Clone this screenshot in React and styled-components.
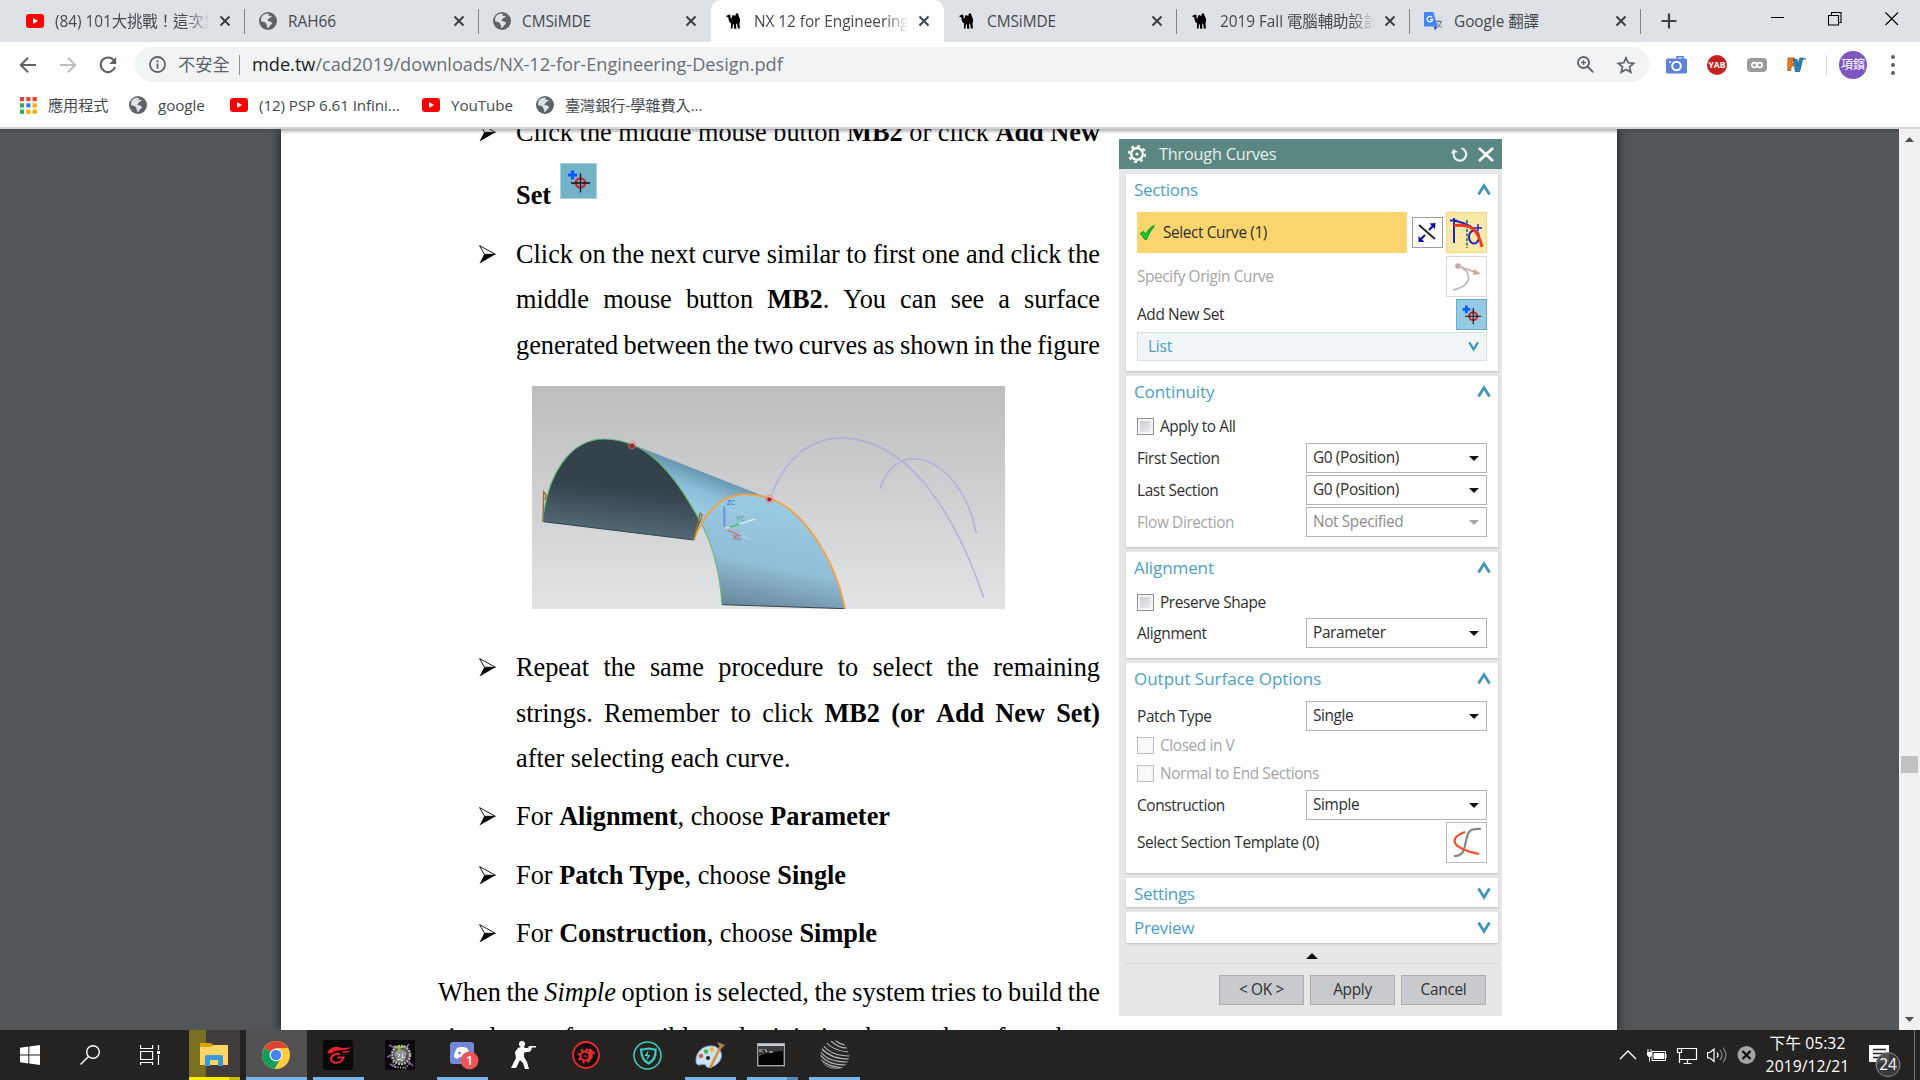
import React from "react";
import styled, { createGlobalStyle, css } from "styled-components";

const UI = `"Open Sans", "Noto Sans CJK TC", sans-serif`;
const SERIF = `"Liberation Serif", "Noto Sans CJK TC", serif`;

const Global = createGlobalStyle`
  *, *::before, *::after { box-sizing: border-box; }
  html, body { margin: 0; padding: 0; overflow: hidden; }
  svg { display: block; flex: none; overflow: visible; }
`;

const Screen = styled.div`
  width: 1920px;
  height: 1080px;
  display: flex;
  flex-direction: column;
  overflow: hidden;
  font-family: ${UI};
  background: #fff;
`;

/* ---------- tab strip ---------- */
const TabStrip = styled.div`
  height: 42px;
  flex: none;
  background: #dee1e6;
  display: flex;
  padding-left: 12px;
`;
const Tab = styled.div`
  width: ${(p) => p.$w || 233}px;
  height: 42px;
  flex: none;
  display: flex;
  align-items: center;
  padding: 0 14px 0 14px;
  background: ${(p) => (p.$active ? "#fff" : "transparent")};
  border-radius: 10px 10px 0 0;
  position: relative;
  ${(p) =>
    p.$sep &&
    css`
      &::after {
        content: "";
        position: absolute;
        right: 0;
        top: 9px;
        width: 1px;
        height: 25px;
        background: #808387;
      }
    `}
`;
const TabTitle = styled.span`
  flex: 1;
  min-width: 0;
  margin: 1px 9px 0 11px;
  font-size: 15.4px;
  letter-spacing: -0.05px;
  line-height: 25px;
  color: #45494d;
  white-space: nowrap;
  overflow: hidden;
  ${(p) => p.$fade && css`mask-image: linear-gradient(90deg, #000 84%, transparent 100%);`}
`;
const NewTab = styled.div`
  width: 56px;
  display: flex;
  align-items: center;
  justify-content: center;
`;
const WindowButtons = styled.div`
  margin-left: auto;
  display: flex;
  align-items: flex-start;
  padding: 12px 21px 0 0;
  gap: 43px;
`;

/* ---------- toolbar ---------- */
const Toolbar = styled.div`
  height: 45px;
  flex: none;
  display: flex;
  align-items: center;
  padding-left: 19px;
`;
const NavButtons = styled.div`
  width: 116px;
  display: flex;
  gap: 22px;
  align-items: center;
`;
const Omnibox = styled.div`
  width: 1514px;
  height: 35px;
  border-radius: 18px;
  background: #f1f3f4;
  display: flex;
  align-items: center;
  padding: 0 14px 0 14px;
`;
const Insecure = styled.span`
  margin-left: 12px;
  width: 61px;
  font-size: 17.3px;
  line-height: 24px;
  color: #5f6368;
`;
const VRule = styled.span`
  width: 1px;
  height: 20px;
  background: ${(p) => p.$c || "#8d9094"};
`;
const Url = styled.span`
  margin: -2px 0 0 12px;
  flex: 1;
  font-size: 18.2px;
  letter-spacing: -0.02px;
  line-height: 26px;
  color: #6b6f74;
  white-space: nowrap;
  b { font-weight: 400; color: #202124; }
`;
const OmniIcons = styled.div`
  display: flex;
  align-items: center;
  gap: 23px;
`;
const Extensions = styled.div`
  display: flex;
  align-items: center;
  gap: 20px;
  margin-left: 17px;
`;
const Avatar = styled.div`
  width: 28px;
  height: 28px;
  border-radius: 50%;
  background: #7e57c2;
  color: #fff;
  font-size: 12px;
  line-height: 27px;
  text-align: center;
  white-space: nowrap;
  margin-left: 12px;
`;
const MenuDots = styled.div`
  display: grid;
  gap: 4px;
  margin-left: 24px;
  i { width: 4px; height: 4px; border-radius: 50%; background: #5f6368; }
`;

/* ---------- bookmarks ---------- */
const Bookmarks = styled.div`
  height: 40px;
  flex: none;
  display: flex;
  align-items: center;
  padding: 0 0 4px 19px;
`;
const Bookmark = styled.div`
  display: flex;
  align-items: center;
  gap: 11px;
  width: ${(p) => p.$w}px;
  font-size: 15.2px;
  letter-spacing: -0.08px;
  line-height: 22px;
  color: #45494d;
  white-space: nowrap;
`;

/* ---------- viewer ---------- */
const Viewer = styled.div`
  height: 903px;
  flex: none;
  display: flex;
  background: #525659;
  border-top: 2px solid #d3d4d8;
  padding-left: 281px;
  overflow: hidden;
  position: relative;
  &::before {
    content: "";
    position: absolute;
    z-index: 2;
    inset: 0 21px auto 0;
    height: 5px;
    background: linear-gradient(rgba(60, 60, 65, 0.4), rgba(60, 60, 65, 0));
  }
`;
const Page = styled.div`
  width: 1336px;
  height: 901px;
  flex: none;
  background: #fff;
  display: flex;
  align-items: flex-start;
  box-shadow: 0 0 9px 1px rgba(0, 0, 0, 0.6);
`;
const TextColumn = styled.div`
  width: 662px;
  margin: -19px 0 0 157px;
  font-family: ${SERIF};
  font-size: 26.3px;
  line-height: 45.4px;
  color: #000;
`;
const Item = styled.div`
  display: grid;
  grid-template-columns: 37px 584px;
  padding-left: 41px;
  margin-bottom: ${(p) => p.$mb || 0}px;
`;
const BulletBox = styled.div`
  padding-top: 13px;
`;
const Line = styled.div`
  height: ${(p) => p.$h || 45.4}px;
  white-space: nowrap;
  display: flex;
  justify-content: ${(p) => (p.$j ? "space-between" : "flex-start")};
  gap: ${(p) => (p.$j ? 0 : "6.6px")};
  align-items: flex-start;
`;
const FigureBox = styled.div`
  width: 473px;
  height: 223px;
  margin: 18px 0 36px 94px;
  overflow: hidden;
`;
const InlineIcon = styled.div`
  width: 37px;
  height: 36px;
  margin: -10px 0 0 2px;
  border: 1px solid #a7d2e0;
  background: #74b2c8;
`;

/* ---------- dialog ---------- */
const Dialog = styled.div`
  width: 383px;
  height: 877px;
  margin: 10px 0 0 19px;
  background: #e7e7e7;
  display: flex;
  flex-direction: column;
`;
const DialogHeader = styled.div`
  height: 30px;
  background: #5b8782;
  color: #e6efee;
  display: flex;
  align-items: center;
  padding: 0 8px 0 9px;
  font-size: 16.3px;
  letter-spacing: -0.22px;
  span { flex: 1; margin-left: 13px; }
  svg + svg { margin-left: 10px; }
`;
const Cards = styled.div`
  display: flex;
  flex-direction: column;
  gap: 5px;
  padding: 5px 4px 0 7px;
`;
const Card = styled.div`
  height: ${(p) => p.$h}px;
  background: #fff;
  padding: 0 11px 0 11px;
  box-shadow: 0 1px 2px #bdbdbd;
`;
const CardTitle = styled.div`
  height: ${(p) => p.$h || 37}px;
  padding-top: ${(p) => p.$pt ?? 3}px;
  margin: 0 -4px 0 -3px;
  display: flex;
  justify-content: space-between;
  font-size: 17px;
  line-height: 25px;
  letter-spacing: ${(p) => p.$ls ?? -0.3}px;
  color: #4ba0ca;
  svg { margin-top: 7px; }
`;
const Row = styled.div`
  height: ${(p) => p.$h}px;
  display: flex;
  align-items: center;
  justify-content: space-between;
  font-size: 15.4px;
  letter-spacing: -0.38px;
  color: ${(p) => (p.$off ? "#a5a5a5" : "#2f2f2f")};
  white-space: nowrap;
`;
const Active = styled.div`
  width: 270px;
  height: 41px;
  margin-right: 1px;
  background: #fcd56c;
  display: flex;
  align-items: center;
  gap: 8px;
  padding-left: 3px;
`;
const IconButton = styled.div`
  width: ${(p) => p.$s}px;
  height: ${(p) => p.$s}px;
  border: 1px solid ${(p) => p.$bd || "#bdbdbd"};
  background: ${(p) => p.$bg || "#fff"};
  display: flex;
  align-items: center;
  justify-content: center;
`;
const ListBar = styled.div`
  height: 29px;
  margin-top: 2px;
  border: 1px solid #dcdfe0;
  background: #f0f6f8;
  color: #4ba0ca;
  font-size: 15.4px;
  letter-spacing: -0.2px;
  display: flex;
  align-items: center;
  justify-content: space-between;
  padding: 0 7px 0 10px;
`;
const Select = styled.div`
  width: 181px;
  height: 30px;
  border: 1px solid #b4b4b4;
  background: #fff;
  display: flex;
  align-items: center;
  justify-content: space-between;
  padding: 0 7px 1px 6px;
  color: ${(p) => (p.$off ? "#8d8d8d" : "#2f2f2f")};
  &::after {
    content: "";
    margin-top: 1px;
    border: 5px solid transparent;
    border-top-color: ${(p) => (p.$off ? "#a5a5a5" : "#111")};
    border-bottom: 0;
  }
`;
const Check = styled.div`
  height: ${(p) => p.$h}px;
  padding-top: ${(p) => p.$pt || 0}px;
  display: flex;
  align-items: flex-start;
  gap: 6px;
  font-size: 15.4px;
  line-height: 18px;
  letter-spacing: ${(p) => p.$ls ?? -0.4}px;
  color: ${(p) => (p.$off ? "#a5a5a5" : "#2f2f2f")};
  &::before {
    content: "";
    width: 17px;
    height: 17px;
    border: 1px solid ${(p) => (p.$off ? "#c0c0c0" : "#8d8f8f")};
    box-shadow: inset 0 0 0 2px #f6f6f6;
    background: ${(p) => (p.$off ? "#fafafa" : "linear-gradient(135deg, #c4c7cf, #f6f6f6)")};
  }
`;
const Collapse = styled.div`
  height: 21px;
  margin: 0 4px 0 7px;
  border-bottom: 1px solid #d3d3d3;
  display: flex;
  justify-content: center;
  padding-top: 10px;
  &::after {
    content: "";
    height: 6px;
    border: 6px solid transparent;
    border-bottom-color: #111;
    border-top: 0;
  }
`;
const Buttons = styled.div`
  display: flex;
  gap: 6px;
  justify-content: flex-end;
  padding: 11px 16px 0 0;
`;
const Button = styled.div`
  width: 85px;
  height: 30px;
  border: 1px solid #adadad;
  background: #c8cacd;
  font-size: 15.4px;
  letter-spacing: -0.3px;
  line-height: 28px;
  text-align: center;
  color: #303030;
`;

/* ---------- scrollbar ---------- */
const ScrollBar = styled.div`
  width: 21px;
  margin-left: auto;
  background: #f1f1f1;
  display: flex;
  flex-direction: column;
  align-items: center;
  padding: 8px 0;
`;
const Thumb = styled.div`
  width: 17px;
  height: 17px;
  margin: 614px 0 auto;
  background: #c1c1c1;
`;

/* ---------- taskbar ---------- */
const Taskbar = styled.div`
  height: 50px;
  flex: none;
  background: #252322;
  display: flex;
  color: #fff;
`;
const StartArea = styled.div`
  width: 184px;
  display: flex;
  align-items: center;
  padding-left: 20px;
  gap: 40px;
`;
const Slot = styled.div`
  width: 62px;
  height: 50px;
  display: flex;
  align-items: center;
  justify-content: center;
  padding-right: ${(p) => p.$pr ?? 2}px;
  position: relative;
  background: ${(p) => (p.$focus ? "linear-gradient(90deg, #525050 61px, transparent 61px)" : "transparent")};
  &::after {
    content: "";
    position: absolute;
    left: ${(p) => (p.$focus ? 0 : 5)}px;
    right: ${(p) => (p.$focus ? 1 : 6)}px;
    bottom: 0;
    height: 3px;
    background: ${(p) => p.$line || "transparent"};
  }
`;
const Progress = styled.div`
  width: 51px;
  height: 50px;
  display: flex;
  align-items: center;
  justify-content: center;
  padding-right: 1px;
  background: linear-gradient(90deg, #7a7022 17px, #403d3c 17px);
`;
const Tray = styled.div`
  margin-left: auto;
  display: flex;
  align-items: center;
`;
const TrayIcons = styled.div`
  display: flex;
  align-items: center;
  gap: 10px;
`;
const Clock = styled.div`
  width: 100px;
  padding-left: 1px;
  text-align: center;
  font-size: 15.7px;
  letter-spacing: 0.05px;
  line-height: 23px;
`;
const Notify = styled.div`
  width: 57px;
  padding-left: 12px;
`;
const PeekLine = styled.div`
  width: 1px;
  height: 50px;
  margin-right: 5px;
  background: #77767a;
`;

/* ---------- icons ---------- */
const CloseX = () => (
  <svg width="12" height="12" viewBox="0 0 12 12" stroke="#3c4043" strokeWidth="2">
    <path d="M1.500 1.500l9 9M10.500 1.500l-9 9" />
  </svg>
);
const YT = () => (
  <svg width="18" height="14" viewBox="0 0 18 14">
    <rect width="18" height="14" rx="3" fill="#f00" />
    <path d="M7 4l5 3-5 3z" fill="#fff" />
  </svg>
);
const Globe = () => (
  <svg width="18" height="18" viewBox="0 0 18 18">
    <circle cx="9" cy="9" r="9" fill="#5f6368" />
    <path
      d="M9.5 1.8c1.2.2-.3 1.6.3 2.1.9.6 1.8-.5 2.6 0 .8.6-.4 1.4-1.5 1.7-.9.3-1 1.8-2 2.2-.9.3-.6 1.3.7 1.4 1.6 0 2.4.6 3.5 1.8-.3 1.5-1.6 1.6-2.1 2.6-.4 1-1.6 2.5-2.5 2.4-.9-.2.1-1.9-.7-2.8-.8-.8-.4-2-1.6-2.7-1.4-.9-3-.8-4.1-1.5-.4-3.2 1-6 4-6.9.8-.3 2.4-.5 3.4-.3z"
      fill="#dee1e6"
    />
  </svg>
);
const Camel = () => (
  <svg width="18" height="18" viewBox="0 0 18 18">
    <path
      d="M1.500 3.800L4 2.400l1.400.6.200 3.200 1 .3C6.800 4.500 7.400 3 8.300 3c1 0 1.300.9 1.900 1.200C10.500 2.500 11 1.200 12 1.200c1.200 0 1.300 1.800 1.900 3.200 1 1.600 1.500 3.200 1.100 5.200l-.5 2 .4 5h-2l-.7-4.200-.6-1-.5.4.2 5H9.200l-.4-4.600-.9.100-.3 4.200H5.800l.3-4.900C4.700 10.500 3.700 9 3.600 7.500L3.300 5.300l-1.800-.3z"
      fill="#000"
    />
  </svg>
);
const Translate = () => (
  <svg width="19" height="19" viewBox="0 0 19 19">
    <path d="M7 5h11.500v13H10z" fill="#dadce0" />
    <path d="M12 9.500h6M15 8v1.500M17 10c-1 3-2.500 4.500-4.500 5.500M13 11c1 2 2.500 3.500 4.500 4.500" stroke="#6b7f8c" fill="none" />
    <path d="M1 0h8.500l4 14.500H1a1 1 0 0 1-1-1V1a1 1 0 0 1 1-1z" fill="#4285f4" />
    <path d="M9.500 14.500h4L11 18.500z" fill="#2a56c6" />
    <path d="M8 5.200A2.800 2.800 0 1 0 8.700 7.500H6" stroke="#fff" strokeWidth="1.300" fill="none" />
  </svg>
);
const Bullet = () => (
  <svg width="17" height="19" viewBox="0 0 17 19">
    <path d="M.6.6l15.800 8.700H5.500z" fill="#fff" stroke="#000" strokeWidth=".9" />
    <path d="M5.200 9.300h11.300L.5 18.400z" fill="#000" />
  </svg>
);
const NewSet = ({ w, h }) => (
  <svg width={w} height={h} viewBox="0 0 35 34">
    <path d="M11.500 6.500v9M7 11h9" stroke="#0a5cff" strokeWidth="3.200" />
    <circle cx="19.500" cy="19" r="4.600" fill="none" stroke="#d0202a" strokeWidth="2.400" />
    <path d="M19.500 9.500v19M10 19h19" stroke="#111" strokeWidth="1.300" />
  </svg>
);
const Chevron = ({ down, s = 1 }) => (
  <svg width={14 * s} height={11 * s} viewBox="0 0 14 11" fill="none" stroke="#3f97c0" strokeWidth="2.800">
    <path d={down ? "M1.500 .5L7 9.300 12.500 .5" : "M1.500 10.500L7 1.700 12.500 10.500"} />
  </svg>
);
const Tick = () => (
  <svg width="15" height="15" viewBox="0 0 15 15">
    <path d="M.5 8.500L3.300 6.500 5.700 9.500C8 5 10.500 2 14.500.5 11 4.500 8.500 9 6.500 14.500H5z" fill="#1fc82e" stroke="#18a52c" strokeWidth="1.200" />
  </svg>
);
const Figure = () => (
  <svg width="473" height="223" viewBox="36 33 1419 669" preserveAspectRatio="none">
    <defs>
      <linearGradient id="bg" x1="0" y1="0" x2="0" y2="1">
        <stop offset="0" stopColor="#bcbdbf" />
        <stop offset=".5" stopColor="#cfd0d2" />
        <stop offset="1" stopColor="#e2e3e5" />
      </linearGradient>
      <linearGradient id="dark" gradientUnits="userSpaceOnUse" x1="320" y1="200" x2="290" y2="480">
        <stop offset="0" stopColor="#33424a" />
        <stop offset=".5" stopColor="#34434b" />
        <stop offset="1" stopColor="#536b79" />
      </linearGradient>
      <linearGradient id="tube" gradientUnits="userSpaceOnUse" x1="600" y1="310" x2="560" y2="420">
        <stop offset="0" stopColor="#6796b0" />
        <stop offset=".45" stopColor="#8bbdd8" />
        <stop offset="1" stopColor="#9acce6" />
      </linearGradient>
      <linearGradient id="front" gradientUnits="userSpaceOnUse" x1="760" y1="360" x2="690" y2="700">
        <stop offset="0" stopColor="#9bcbe4" />
        <stop offset=".6" stopColor="#92bed7" />
        <stop offset="1" stopColor="#68899c" />
      </linearGradient>
    </defs>
    <rect x="36" y="33" width="1419" height="669" fill="url(#bg)" />
    <path d="M336 208L748 370 640 420 540 440C500 350 430 260 336 208z" fill="url(#tube)" />
    <path d="M540 440C570 395 610 357 680 358C760 362 820 395 880 480C930 550 960 630 975 701L606 689C600 600 580 510 540 440z" fill="url(#front)" />
    <path d="M68 440C80 300 150 190 255 192C370 195 450 270 541 440L521 495z" fill="url(#dark)" />
    <path d="M68 440C80 300 150 190 255 192C370 195 450 270 541 440C580 510 600 600 606 689" fill="none" stroke="#6cba78" strokeWidth="3.500" />
    <path d="M70 440L521 495M606 689L975 701" stroke="#38464f" strokeWidth="3" />
    <path d="M521 495C550 420 600 357 680 358C760 362 820 395 880 480C930 550 960 630 975 701" fill="none" stroke="#f5a142" strokeWidth="5.500" />
    <path d="M69 440L71 350L78 360L75 375M521 495L540 415L546 418L541 440" stroke="#8f7636" strokeWidth="4" fill="none" />
    <path d="M755 360C800 240 880 187 970 189C1160 195 1300 400 1391 668M1080 342C1100 280 1140 250 1180 251C1270 255 1345 350 1369 475" fill="none" stroke="#adadd9" strokeWidth="4" />
    <path d="M613 348v30" stroke="#c9ad89" strokeWidth="4" />
    <path d="M613 393v62" stroke="#6594dc" strokeWidth="6" />
    <path d="M617 460l64-20M681 440l24-8" stroke="#d8f1ea" strokeWidth="4" />
    <path d="M628 457l30-10" stroke="#58b66c" strokeWidth="5" />
    <path d="M617 460l74 35" stroke="#bed8e4" strokeWidth="3" fill="none" />
    <path d="M622 402l68 20M690 465l-30 12" stroke="#a9d3e6" strokeWidth="2" fill="none" />
    <path d="M622 464l34 16" stroke="#cc7b80" strokeWidth="5" />
    <g fontFamily="Liberation Sans, sans-serif" fontSize="19">
      <text x="620" y="391" fill="#2865cf">ZC</text>
      <text x="648" y="437" fill="#46a364">YC</text>
      <text x="638" y="496" fill="#ad3d57">XC</text>
    </g>
    {[[337, 210], [748, 372]].map(([x, y]) => (
      <g key={x}>
        <circle cx={x} cy={y} r="11" fill="none" stroke="#e57e80" strokeWidth="2.500" />
        <circle cx={x} cy={y + 1} r="6.500" fill="#b91e22" />
      </g>
    ))}
  </svg>
);

const TABS = [
  { icon: <YT />, title: "(84) 101大挑戰！這次集", sep: true, fade: true },
  { icon: <Globe />, title: "RAH66", sep: true, w: 234 },
  { icon: <Globe />, title: "CMSiMDE", w: 232 },
  { icon: <Camel />, title: "NX 12 for Engineering", active: true, fade: true },
  { icon: <Camel />, title: "CMSiMDE", sep: true, w: 233 },
  { icon: <Camel />, title: "2019 Fall 電腦輔助設計", sep: true, fade: true },
  { icon: <Translate />, title: "Google 翻譯", sep: true, w: 231 },
];

const Words = ({ children }) =>
  React.Children.toArray(children).flatMap((c, k) =>
    typeof c === "string" ? c.trim().split(" ").filter(Boolean).map((w, i) => <span key={k + "-" + i}>{w}</span>) : [c]
  );
const B = styled.b``;

const Choice = ({ name, value, mb }) => (
  <Item $mb={mb}>
    <BulletBox><Bullet /></BulletBox>
    <Line>
      <span>For</span><span><b>{name}</b>,</span><span>choose</span><b>{value}</b>
    </Line>
  </Item>
);

export default function App() {
  return (
    <Screen>
      <Global />
      <TabStrip>
        {TABS.map((t, i) => (
          <Tab key={i} $active={t.active} $sep={t.sep} $w={t.w}>
            {t.icon}
            <TabTitle $fade={t.fade}>{t.title}</TabTitle>
            <CloseX />
          </Tab>
        ))}
        <NewTab>
          <svg width="16" height="16" viewBox="0 0 16 16" stroke="#3c4043" strokeWidth="2.200"><path d="M8 .5v15M.5 8h15" /></svg>
        </NewTab>
        <WindowButtons>
          <svg width="14" height="14" viewBox="0 0 14 14" stroke="#000"><path d="M0 5.500h13" /></svg>
          <svg width="14" height="14" viewBox="0 0 14 14" stroke="#000" fill="none"><path d="M.5 3.500h10v9.500H.5zM3.500 3V.5h9.500v10H11" strokeWidth="1.100" /></svg>
          <svg width="14" height="14" viewBox="0 0 14 14" stroke="#000"><path d="M.5.5l12.500 12.500M13 .5L.5 13" strokeWidth="1.100" /></svg>
        </WindowButtons>
      </TabStrip>

      <Toolbar>
        <NavButtons>
          <svg width="18" height="18" viewBox="0 0 18 18" fill="none" stroke="#5f6368" strokeWidth="2"><path d="M17 9H2M9 1.800L1.800 9 9 16.200" /></svg>
          <svg width="18" height="18" viewBox="0 0 18 18" fill="none" stroke="#bcbec1" strokeWidth="2"><path d="M1 9h15M9 1.800L16.200 9 9 16.200" /></svg>
          <svg width="18" height="18" viewBox="0 0 18 18" fill="none" stroke="#5f6368" strokeWidth="2.100"><path d="M15 4.500A7.300 7.300 0 1 0 16 11" /><path d="M17.200 1v7h-7z" fill="#5f6368" stroke="none" /></svg>
        </NavButtons>
        <Omnibox>
          <svg width="17" height="17" viewBox="0 0 17 17" fill="none" stroke="#5f6368" strokeWidth="1.800"><circle cx="8.500" cy="8.500" r="7.500" /><path d="M8.500 7.500v5M8.500 4.200v2" /></svg>
          <Insecure>不安全</Insecure>
          <VRule />
          <Url><b>mde.tw</b>/cad2019/downloads/NX-12-for-Engineering-Design.pdf</Url>
          <OmniIcons>
            <svg width="17" height="17" viewBox="0 0 17 17" fill="none" stroke="#5f6368" strokeWidth="1.900"><circle cx="6.500" cy="6.500" r="5.500" /><path d="M10.500 10.500l5.800 5.800" /><path d="M6.500 4v5M4 6.500h5" strokeWidth="1.300" /></svg>
            <svg width="18" height="18" viewBox="0 0 18 18" fill="none" stroke="#5f6368" strokeWidth="1.700"><path d="M9 1.800l2.200 5 5.500.5-4.200 3.600 1.300 5.300L9 13.400l-4.800 2.800 1.300-5.300L1.300 7.300l5.500-.5z" /></svg>
          </OmniIcons>
        </Omnibox>
        <Extensions>
          <svg width="21" height="18" viewBox="0 0 21 18"><rect y="2.500" width="21" height="15" rx="1.500" fill="#5c82de" /><path d="M11 3V.8h6V3" stroke="#5c82de" fill="none" strokeWidth="1.500" /><circle cx="10.500" cy="10" r="4.300" fill="#5c82de" stroke="#fff" strokeWidth="2" /><path d="M3 6h2" stroke="#fff" strokeWidth="1.500" /></svg>
          <svg width="20" height="20" viewBox="0 0 20 20"><circle cx="10" cy="10" r="10" fill="#c5221f" /><text x="10" y="13" textAnchor="middle" fontFamily="Open Sans, sans-serif" fontSize="8.500" fontWeight="700" fill="#fff">YAB</text></svg>
          <svg width="20" height="14" viewBox="0 0 20 14"><rect width="20" height="14" rx="4" fill="#9c9c9c" /><circle cx="7.300" cy="7" r="2.400" fill="none" stroke="#fff" strokeWidth="1.600" /><circle cx="12.700" cy="7" r="2.400" fill="none" stroke="#fff" strokeWidth="1.600" /></svg>
          <svg width="19" height="17" viewBox="0 0 19 17"><path d="M1 2h6.500l-.4 3.200H4.800l-.2 1.800h2.200L6.500 10H4.200L3.800 14.500H.8z" fill="#ef7c1a" stroke="#8c3c10" strokeWidth=".7" /><path d="M6.800 3.500h3.400l.6 6.500L12.800 2h3.200L12.700 15.500H8.300z" fill="#2687b8" stroke="#154e79" strokeWidth=".7" /><path d="M16 3h3" stroke="#333" /></svg>
          <VRule $c="#d0d2d5" />
        </Extensions>
        <Avatar>項鑌</Avatar>
        <MenuDots><i /><i /><i /></MenuDots>
      </Toolbar>

      <Bookmarks>
        <Bookmark $w={110}>
          <svg width="18" height="18" viewBox="0 0 18 18">
            {["#ea4335", "#ea4335", "#ea4335", "#34a853", "#2f80ed", "#fbaa05", "#34a853", "#fbaa05", "#fbaa05"].map((c, i) => (
              <rect key={i} x={1 + (i % 3) * 6.3} y={1 + Math.floor(i / 3) * 6.3} width="4.200" height="4.200" fill={c} />
            ))}
          </svg>
          應用程式
        </Bookmark>
        <Bookmark $w={101}><Globe />google</Bookmark>
        <Bookmark $w={192}><YT />(12) PSP 6.61 Infini...</Bookmark>
        <Bookmark $w={114}><YT />YouTube</Bookmark>
        <Bookmark $w={190}><Globe />臺灣銀行-學雜費入...</Bookmark>
      </Bookmarks>

      <Viewer>
        <Page>
          <TextColumn>
            <Item>
              <BulletBox><Bullet /></BulletBox>
              <div>
                <Line $j $h={63}>
                  <Words>Click the middle mouse button <B>MB2</B> or click <B>Add</B><B>New</B></Words>
                </Line>
                <Line $h={59}>
                  <b>Set</b>
                  <InlineIcon><NewSet w={35} h={34} /></InlineIcon>
                </Line>
              </div>
            </Item>
            <Item>
              <BulletBox><Bullet /></BulletBox>
              <div>
                <Line $j><Words>Click on the next curve similar to first one and click the</Words></Line>
                <Line $j><Words>middle mouse button <span><b>MB2</b>.</span> You can see a surface</Words></Line>
                <Line $j><Words>generated between the two curves as shown in the figure</Words></Line>
              </div>
            </Item>
            <FigureBox><Figure /></FigureBox>
            <Item $mb={13}>
              <BulletBox><Bullet /></BulletBox>
              <div>
                <Line $j><Words>Repeat the same procedure to select the remaining</Words></Line>
                <Line $j><Words>strings. Remember to click <B>MB2</B><B>(or</B><B>Add</B><B>New</B><B>Set)</B></Words></Line>
                <Line>after selecting each curve.</Line>
              </div>
            </Item>
            <Choice name="Alignment" value="Parameter" mb={13} />
            <Choice name="Patch Type" value="Single" mb={13} />
            <Choice name="Construction" value="Simple" mb={13} />
            <Line $j><Words>When the <i>Simple</i> option is selected, the system tries to build the</Words></Line>
            <Line>simplest surface possible and minimize the number of patches.</Line>
          </TextColumn>

          <Dialog>
            <DialogHeader>
              <svg width="18" height="18" viewBox="0 0 18 18" fill="none" stroke="#fff"><circle cx="9" cy="9" r="5.800" strokeWidth="2.200" /><circle cx="9" cy="9" r="8" strokeWidth="2.200" strokeDasharray="3 3.283" /><circle cx="9" cy="9" r="1.500" fill="#fff" stroke="none" /></svg>
              <span>Through Curves</span>
              <svg width="17" height="16" viewBox="0 0 17 16" fill="none" stroke="#e9f1f0" strokeWidth="2.200"><path d="M10.500 2.200A6.300 6.300 0 1 1 3 6" /><path d="M0 7.500L2.500 3 7 6z" fill="#e9f1f0" stroke="none" /></svg>
              <svg width="16" height="15" viewBox="0 0 16 15" stroke="#fff" strokeWidth="2.600"><path d="M1 1l14 13M15 1L1 14" /></svg>
            </DialogHeader>
            <Cards>
              <Card $h={197}>
                <CardTitle>Sections<Chevron /></CardTitle>
                <Row $h={43}>
                  <Active><Tick /><span>Select Curve (1)</span></Active>
                  <IconButton $s={31} $bd="#9d9d9d">
                    <svg width="20" height="21" viewBox="0 0 20 21"><path d="M2 3l16 14" stroke="#222" strokeWidth="1.800" /><path d="M12 8l4-4M8 13l-4 4" stroke="#0a0ab0" strokeWidth="2" /><path d="M12.500 1.500L18.500 1l-.5 6zM1.500 14v6h6z" fill="#0a0ab0" /></svg>
                  </IconButton>
                  <IconButton $s={41} $bg="#f9e9a9" $bd="#fad57a">
                    <svg width="34" height="34" viewBox="0 0 34 34" fill="none"><path d="M4 2v25M0 4.500h7M4 4.500C15 7 25 10 29 21" stroke="#2525b8" strokeWidth="2" /><ellipse cx="24" cy="21" rx="5" ry="6.500" stroke="#2525b8" strokeWidth="2" /><path d="M24 12h8M28 8v7" stroke="#2525b8" strokeWidth="1.500" /><path d="M17 4v28" stroke="#28856a" strokeWidth="1.800" strokeDasharray="3 1.500" /><path d="M4 9.500C20 8 28 12 32 31" stroke="#ef3a1e" strokeWidth="2.800" /></svg>
                  </IconButton>
                </Row>
                <Row $h={45} $off>
                  <span>Specify Origin Curve</span>
                  <IconButton $s={41} $bd="#dadada">
                    <svg width="30" height="30" viewBox="0 0 30 30" fill="none"><circle cx="6" cy="4" r="2.800" fill="#c9a5a5" /><path d="M6 4l17 6" stroke="#c9a5a5" strokeWidth="1.800" /><path d="M22 7l7 5-8 1z" fill="#c9a5a5" /><path d="M6 4c14 5 16 19-5 24" stroke="#bdbdbd" strokeWidth="2" /></svg>
                  </IconButton>
                </Row>
                <Row $h={31}>
                  <span>Add New Set</span>
                  <IconButton $s={31} $bg="#96cae4" $bd="#63abd0"><NewSet w={31} h={29} /></IconButton>
                </Row>
                <ListBar>List<Chevron down s={0.8} /></ListBar>
              </Card>
              <Card $h={171}>
                <CardTitle $h={42} $ls={-0.1}>Continuity<Chevron /></CardTitle>
                <Check $h={24}>Apply to All</Check>
                <Row $h={32}><span>First Section</span><Select>G0 (Position)</Select></Row>
                <Row $h={32}><span>Last Section</span><Select>G0 (Position)</Select></Row>
                <Row $h={32} $off><span>Flow Direction</span><Select $off>Not Specified</Select></Row>
              </Card>
              <Card $h={106}>
                <CardTitle $h={42} $ls={-0.1}>Alignment<Chevron /></CardTitle>
                <Check $h={23}>Preserve Shape</Check>
                <Row $h={32}><span>Alignment</span><Select>Parameter</Select></Row>
              </Card>
              <Card $h={210}>
                <CardTitle $ls={-0.02}>Output Surface Options<Chevron /></CardTitle>
                <Row $h={32}><span>Patch Type</span><Select>Single</Select></Row>
                <Check $h={33} $pt={5} $off>Closed in V</Check>
                <Check $h={24} $off>Normal to End Sections</Check>
                <Row $h={32}><span>Construction</span><Select>Simple</Select></Row>
                <Row $h={42}>
                  <span>Select Section Template (0)</span>
                  <IconButton $s={41}>
                    <svg width="30" height="30" viewBox="0 0 30 30" fill="none" strokeWidth="2.200"><path d="M29 2C16 1 16 6 14 14S12 29 2 29" stroke="#858585" /><path d="M13 5C-4 11-1 21 27 27" stroke="#f4502e" /></svg>
                  </IconButton>
                </Row>
              </Card>
              <Card $h={29}><CardTitle $h={29}>Settings<Chevron down /></CardTitle></Card>
              <Card $h={31}><CardTitle $h={31}>Preview<Chevron down /></CardTitle></Card>
            </Cards>
            <Collapse />
            <Buttons>
              <Button>&lt; OK &gt;</Button>
              <Button>Apply</Button>
              <Button>Cancel</Button>
            </Buttons>
          </Dialog>
        </Page>
        <ScrollBar>
          <svg width="9" height="5" viewBox="0 0 9 5"><path d="M0 5L4.500 0 9 5z" fill="#505050" /></svg>
          <Thumb />
          <svg width="9" height="5" viewBox="0 0 9 5"><path d="M0 0l4.500 5L9 0z" fill="#505050" /></svg>
        </ScrollBar>
      </Viewer>

      <Taskbar>
        <StartArea>
          <svg width="20" height="20" viewBox="0 0 20 20" fill="#fff"><path d="M0 2.800L8.300 1.600V9.500H0zM9.300 1.500L20 0v9.500H9.300zM0 10.500h8.300v7.900L0 17.200zM9.300 10.500H20V20L9.300 18.500z" /></svg>
          <svg width="20" height="20" viewBox="0 0 20 20" fill="none" stroke="#fff" strokeWidth="1.400"><circle cx="13" cy="7" r="6.300" /><path d="M8.500 11.500L.5 19.500" /></svg>
          <svg width="20" height="20" viewBox="0 0 20 20" fill="none" stroke="#fff" strokeWidth="1.200"><path d="M.6 0v3.500h12V0M.6 6.500h12v8H.6zM.6 20v-2.500h12V20M18.500 0v5M18.500 10v10" /><rect x="17" y="6" width="3" height="3" fill="#fff" stroke="none" /></svg>
        </StartArea>
        <Slot $pr={1} $line="linear-gradient(90deg, #fff000 40px, #cabb05 40px)">
          <Progress>
            <svg width="28" height="24" viewBox="0 0 28 24"><path d="M0 0h11l2 2v3H0z" fill="#e0a011" /><path d="M0 4h11l2.500-2H28v20H0z" fill="#fcd664" /><path d="M5 23V14a2 2 0 0 1 2-2h14a2 2 0 0 1 2 2v9h-5v-6h-8v6z" fill="#3b98da" /></svg>
          </Progress>
        </Slot>
        <Slot $focus $line="#76b5ed">
          <svg width="28" height="28" viewBox="0 0 28 28"><circle cx="14" cy="14" r="14" fill="#ffcd40" /><path d="M14 14L1.900 7A14 14 0 0 0 12.500 27.900L19 17z" fill="#0f9d58" /><path d="M1.900 7a14 14 0 0 1 24.200 0H14v7z" fill="#db4437" /><circle cx="14" cy="14" r="6.500" fill="#f1f1f1" /><circle cx="14" cy="14" r="5.200" fill="#4285f4" /></svg>
        </Slot>
        <Slot $line="#76b5ed">
          <svg width="30" height="30" viewBox="0 0 30 30"><rect width="30" height="30" rx="3" fill="#080808" /><path d="M4 12.500C8 7 13 6 17 7.500c3 1 7 .5 11.500-.5-2 2-5 3-8 3-4 .5-8 .5-11.500 2.500 1 0 2 0 2.500.5-3 .5-5.500.5-7.500-.500zM19 11c3 .5 6 .3 9-.5-2 2-5 2.500-8 2.300z" fill="#e5242b" /><path d="M17 14c-5-.5-9 1.500-9 5 0 2.800 3 4 6 3.700 3.500-.2 5.500-2 6.500-5.200h-6" fill="none" stroke="#e5242b" strokeWidth="2.200" /></svg>
        </Slot>
        <Slot>
          <svg width="30" height="30" viewBox="0 0 30 30"><rect width="30" height="30" fill="#0b090d" /><circle cx="16" cy="15" r="9" fill="#4c4c4e" stroke="#b9b9b9" strokeWidth="2.500" strokeDasharray="2 1" /><path d="M9 14c2-6 10-6 13-1l-2 7-4 2-4-1z" fill="#8e9093" /><path d="M12 13l3 2-2 2M18 13l-1 5 3-1M12 20l3-1 3 2" stroke="#e6e6e6" fill="none" /><path d="M4 5l6 3M2 17l5-2M24 4l-4 5M23 21l5 5M5 24l5 3" stroke="#89659c" strokeWidth="1.500" /><path d="M9 6l6 2 5-2M14 7v4" stroke="#9eca45" strokeWidth="1.500" fill="none" /><path d="M8 22l3 5 9 1 5-5" stroke="#bbb" strokeDasharray="1 1.500" fill="none" strokeWidth="2" /></svg>
        </Slot>
        <Slot $pr={1} $line="#76b5ed">
          <svg width="26" height="26" viewBox="0 0 26 26"><rect width="24" height="22" rx="3" fill="#7289da" /><path d="M7 6c3-1.500 7-1.500 10 0 2 3 3 6 3 9-1 1-2 1.500-4 2l-1-2H9l-1 2c-2-.5-3-1-4-2 0-3 1-6 3-9z" fill="#fff" /><circle cx="9.500" cy="11" r="1.500" fill="#7289da" /><circle cx="19.500" cy="18.500" r="9" fill="#ef5457" /><text x="19.500" y="23.200" textAnchor="middle" fontFamily="Open Sans, sans-serif" fontWeight="600" fontSize="13" fill="#fff">1</text></svg>
        </Slot>
        <Slot>
          <svg width="26" height="29" viewBox="0 0 26 29" fill="#fff"><circle cx="11" cy="3" r="3" /><path d="M7 7l5-2 2 2h3l1-2h7v1.500h-4l-1 3-2 1.500h-3l-2 1v4l3 5 2 7h-4l-2-6-3-3-4 8H0l5-10-1-6z" /></svg>
        </Slot>
        <Slot $pr={3}>
          <svg width="28" height="28" viewBox="0 0 28 28" fill="none" stroke="#ee2a2d"><circle cx="14" cy="14" r="13" strokeWidth="1.800" fill="#130f10" /><circle cx="13" cy="15" r="4.500" strokeWidth="2" /><circle cx="13" cy="15" r="6.500" strokeWidth="2" strokeDasharray="2.500 2.600" /><path d="M18 8l5 4-3 1c1 3-2 6-4 8 2-5 2-8 1-13z" fill="#ee2a2d" /><path d="M13 14v2h2" /></svg>
        </Slot>
        <Slot $pr={3}>
          <svg width="29" height="29" viewBox="0 0 29 29" fill="none" stroke="#3ccdbd"><circle cx="14.500" cy="14.500" r="13.500" strokeWidth="1.600" /><path d="M8 8.500c5 0 7-1 8-1s3 1 6.500 1c.5 6-1 11-7 14-5-3-7-6-7.500-14z" strokeWidth="2.200" /><path d="M15.500 9l-4 6h3l-1 5 4-6h-3z" fill="#3ccdbd" stroke="none" /></svg>
        </Slot>
        <Slot $line="#76b5ed">
          <svg width="30" height="29" viewBox="0 0 30 29"><path d="M1 20C1 10 9 4 18 5c9 2 11 11 5 17-4 4-10 6-12 3-1-3-4-1-7-1-2 0-3-2-3-4z" fill="#c9e2f3" stroke="#8bb5d4" /><circle cx="6" cy="15" r="2.300" fill="#e25750" /><circle cx="11" cy="10.500" r="2.300" fill="#4fb456" /><circle cx="17" cy="8.500" r="2.300" fill="#f4b52a" /><circle cx="13" cy="17" r="2" fill="#252322" /><path d="M26 5L15 27" stroke="#dd8a2c" strokeWidth="2.500" /><path d="M22 1l8 3-4 4z" fill="#a97f53" /></svg>
        </Slot>
        <Slot $pr={4} $line="linear-gradient(90deg, #76b5ed 40px, #5689b6 40px)">
          <svg width="28" height="24" viewBox="0 0 28 24"><rect x=".7" y=".7" width="26.600" height="22" fill="#030303" stroke="#a0a7ae" strokeWidth="1.400" /><path d="M1 1h26v2H1z" fill="#c6cdd4" /><path d="M1.400 3h25.200v5C12 9 6 11 1.400 14z" fill="#3b3b3d" /><path d="M3 6v3M5 6v1M5 8v1M8 6l2 3M12 9h4" stroke="#ddd" /></svg>
        </Slot>
        <Slot $pr={1} $line="#76b5ed">
          <svg width="30" height="30" viewBox="0 0 30 30">
            <defs><clipPath id="ball"><circle cx="15" cy="15" r="14.500" /></clipPath></defs>
            <circle cx="15" cy="15" r="14.500" fill="#262626" />
            <g clipPath="url(#ball)" fill="none" stroke="#c9c9c9" strokeWidth="1.200"><path d="M6 2c4 5 10 9 22 10M10 0c4 4 9 8 17 8M3 5c5 7 13 11 27 11M1 8c6 7 14 11 28 11M0 11c6 8 14 11 28 11M0 15c6 7 13 10 27 10M0 19c6 6 12 8 25 9M15 0c3 3 6 4 10 5" opacity=".85" /><path d="M2 23c6 5 10 5 20 6" opacity=".5" /></g>
          </svg>
        </Slot>
        <Tray>
          <TrayIcons>
            <svg width="18" height="20" viewBox="0 0 18 20" fill="none" stroke="#fff" strokeWidth="1.400"><path d="M1 14l8-8 8 8" /></svg>
            <svg width="20" height="20" viewBox="0 0 20 20" fill="none" stroke="#fff"><path d="M5 6.500h13.500v9H5zM2.500 12v4.500M1 4v3M4 4v3" /><path d="M0 7h5v3L3.500 12h-2L0 10z" fill="#fff" stroke="none" /><path d="M7 8.500h10v5H7zM19 9v4" fill="#fff" /></svg>
            <svg width="20" height="20" viewBox="0 0 20 20" fill="none" stroke="#fff"><path d="M5 3.500h14.500v11H3M10.500 15v3M6.500 18.500h8M.5 3.500h4v4h-4zM2.500 7.500V18" strokeWidth="1.200" /></svg>
            <svg width="20" height="20" viewBox="0 0 20 20" fill="none" stroke="#fff" strokeWidth="1.200"><path d="M.6 7.500H3L7 4v12.500L3 13H.6zM10 7.500q2 2.500 0 5" /><path d="M13 5q4 5 0 10M16 2.500q6 7.500 0 15" stroke="#848484" /></svg>
            <svg width="20" height="20" viewBox="0 0 20 20"><circle cx="9.500" cy="10" r="9" fill="#a4a4a4" /><path d="M5.500 6l8 8M13.500 6l-8 8" stroke="#111" strokeWidth="2.400" /></svg>
          </TrayIcons>
          <Clock>下午 05:32<br />2019/12/21</Clock>
          <Notify>
            <svg width="32" height="22" viewBox="0 0 32 22"><path d="M0 1h20v17h-9l-4 4v-4H0z" fill="#fff" /><path d="M4 5.500h13M4 9.500h13M4 13.500h8" stroke="#222" strokeWidth="1.400" /><circle cx="19" cy="20.500" r="12" fill="#3b3b3b" fillOpacity=".88" stroke="#8b8b8b" /><text x="19" y="26" textAnchor="middle" fontFamily="Open Sans, sans-serif" fontSize="15.500" fill="#fff">24</text></svg>
          </Notify>
          <PeekLine />
        </Tray>
      </Taskbar>
    </Screen>
  );
}
